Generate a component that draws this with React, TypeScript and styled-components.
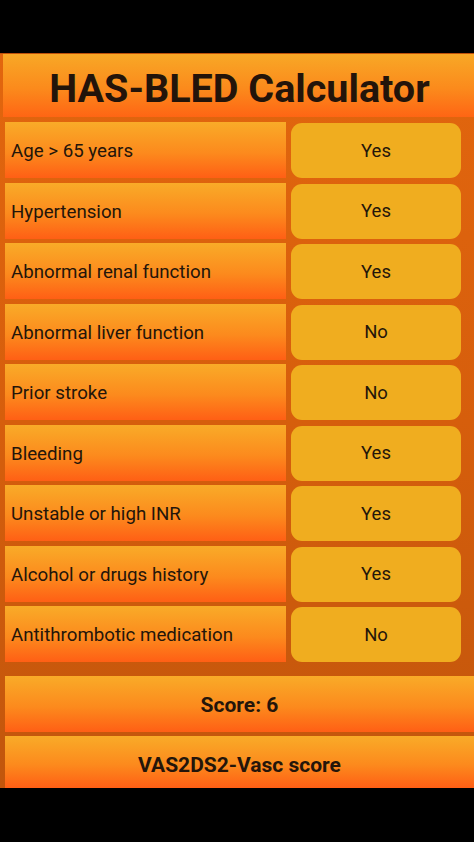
import React from "react";
import styled, { createGlobalStyle } from "styled-components";

const Global = createGlobalStyle`
  html, body { margin: 0; padding: 0; background: #000; }
  body { font-family: Roboto, "Liberation Sans", sans-serif; }
  * { box-sizing: border-box; }
`;

const Screen = styled.div`
  width: 474px;
  height: 842px;
  background: #000;
  padding-top: 53px;
  overflow: hidden;
`;

const AppPanel = styled.div`
  height: 735px;
  display: flex;
  flex-direction: column;
  background: linear-gradient(180deg, #e2660e 0%, #d65e0c 50%, #c2560c 100%);
  border-top: 1px solid #c0500a;
`;

const Header = styled.header`
  margin-left: 3px;
  height: 63px;
  display: flex;
  align-items: center;
  justify-content: center;
  padding-top: 5px;
  background: linear-gradient(180deg, #f8a826 0%, #fb8a1c 55%, #ff6514 100%);
`;

const Title = styled.h1`
  margin: 0;
  font-family: Roboto, "Liberation Sans", sans-serif;
  font-weight: 700;
  font-size: 39.5px;
  color: #23140a;
  letter-spacing: 0;
  transform: translateX(1px);
`;

const List = styled.div`
  display: flex;
  flex-direction: column;
  gap: 4.5px;
  padding: 5px 13px 0 5px;
`;

const Row = styled.div`
  display: grid;
  grid-template-columns: 281px 170px;
  column-gap: 5px;
  height: 56px;
`;

const Label = styled.div`
  display: flex;
  align-items: center;
  padding: 2px 0 0 6px;
  font-size: 18.7px;
  color: #24150a;
  background: linear-gradient(180deg, #f9ab28 0%, #fc8a1d 55%, #ff5f15 100%);
`;

const Toggle = styled.button`
  border: none;
  margin: 1px 0 0;
  border-radius: 11px;
  background: #f0ad1f;
  font-family: Roboto, "Liberation Sans", sans-serif;
  font-size: 18.5px;
  color: #24150a;
  display: flex;
  align-items: center;
  justify-content: center;
  padding: 0;
`;

const Footer = styled.div`
  display: flex;
  flex-direction: column;
  gap: 4px;
  padding: 14px 0 0 5px;
`;

const Bar = styled.div<{ $h: number; $shift: number }>`
  height: ${(p) => p.$h}px;
  display: flex;
  align-items: center;
  justify-content: center;
  padding-top: ${(p) => p.$shift}px;
  font-weight: 700;
  font-size: 21px;
  color: #24150a;
  background: linear-gradient(180deg, #f9ab28 0%, #fc8a1d 55%, #ff5f15 100%);
`;

const items: [string, string][] = [
  ["Age > 65 years", "Yes"],
  ["Hypertension", "Yes"],
  ["Abnormal renal function", "Yes"],
  ["Abnormal liver function", "No"],
  ["Prior stroke", "No"],
  ["Bleeding", "Yes"],
  ["Unstable or high INR", "Yes"],
  ["Alcohol or drugs history", "Yes"],
  ["Antithrombotic medication", "No"],
];

export default function App() {
  const score = items.filter(([, v]) => v === "Yes").length;
  return (
    <>
      <Global />
      <Screen>
        <AppPanel>
          <Header>
            <Title>HAS-BLED Calculator</Title>
          </Header>
          <List>
            {items.map(([label, value]) => (
              <Row key={label}>
                <Label>{label}</Label>
                <Toggle>{value}</Toggle>
              </Row>
            ))}
          </List>
          <Footer>
            <Bar $h={56} $shift={1}>Score: {score}</Bar>
            <Bar $h={52} $shift={5}>VAS2DS2-Vasc score</Bar>
          </Footer>
        </AppPanel>
      </Screen>
    </>
  );
}
